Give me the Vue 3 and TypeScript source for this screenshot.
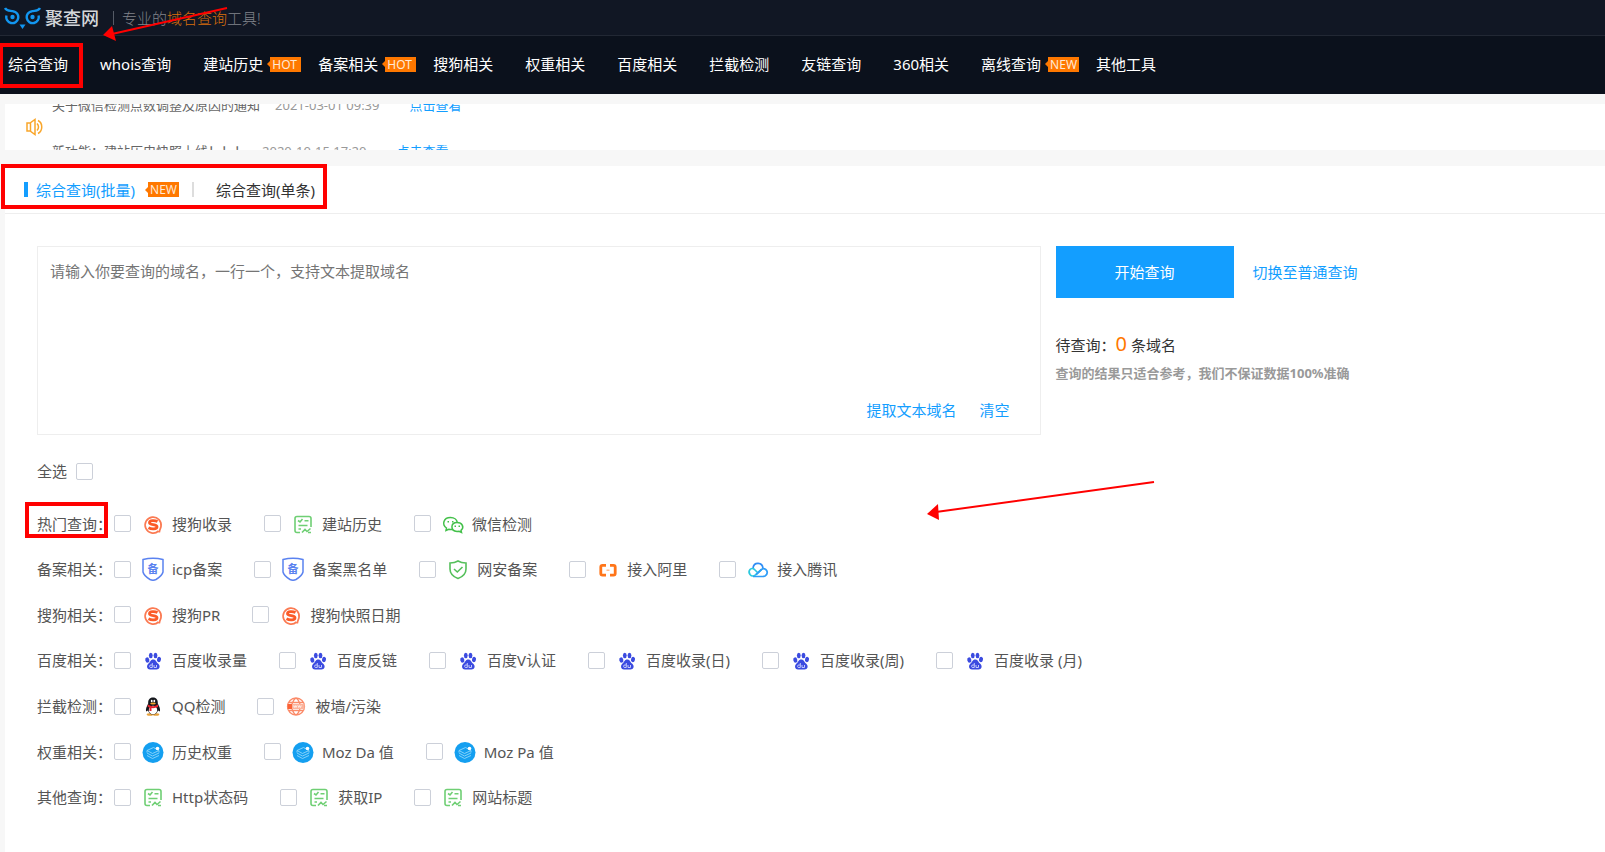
<script setup lang="ts">
import { ref, computed } from 'vue'

interface NavItem { text: string; badge?: string }
interface Option { icon: string; text: string }
interface Group { title: string; options: Option[] }

const nav: NavItem[] = [
  { text: '综合查询' },
  { text: 'whois查询' },
  { text: '建站历史', badge: 'HOT' },
  { text: '备案相关', badge: 'HOT' },
  { text: '搜狗相关' },
  { text: '权重相关' },
  { text: '百度相关' },
  { text: '拦截检测' },
  { text: '友链查询' },
  { text: '360相关' },
  { text: '离线查询', badge: 'NEW' },
  { text: '其他工具' },
]

const notices = [
  { text: '关于微信检测点数调整及原因的通知', date: '2021-03-01 09:39' },
  { text: '新功能：建站历史快照上线！！！', date: '2020-10-15 17:20' },
]

const groups: Group[] = [
  { title: '热门查询', options: [
    { icon: 'sogou', text: '搜狗收录' },
    { icon: 'list', text: '建站历史' },
    { icon: 'wechat', text: '微信检测' },
  ] },
  { title: '备案相关', options: [
    { icon: 'icp', text: 'icp备案' },
    { icon: 'icp', text: '备案黑名单' },
    { icon: 'shield', text: '网安备案' },
    { icon: 'ali', text: '接入阿里' },
    { icon: 'cloud', text: '接入腾讯' },
  ] },
  { title: '搜狗相关', options: [
    { icon: 'sogou', text: '搜狗PR' },
    { icon: 'sogou', text: '搜狗快照日期' },
  ] },
  { title: '百度相关', options: [
    { icon: 'baidu', text: '百度收录量' },
    { icon: 'baidu', text: '百度反链' },
    { icon: 'baidu', text: '百度V认证' },
    { icon: 'baidu', text: '百度收录(日)' },
    { icon: 'baidu', text: '百度收录(周)' },
    { icon: 'baidu', text: '百度收录 (月)' },
  ] },
  { title: '拦截检测', options: [
    { icon: 'qq', text: 'QQ检测' },
    { icon: 'globe', text: '被墙/污染' },
  ] },
  { title: '权重相关', options: [
    { icon: 'stack', text: '历史权重' },
    { icon: 'stack', text: 'Moz Da 值' },
    { icon: 'stack', text: 'Moz Pa 值' },
  ] },
  { title: '其他查询', options: [
    { icon: 'list', text: 'Http状态码' },
    { icon: 'list', text: '获取IP' },
    { icon: 'list', text: '网站标题' },
  ] },
]

const domains = ref('')
const selected = ref<string[]>([])
const allKeys = groups.flatMap(g => g.options.map(o => g.title + o.text))
const count = computed(() => domains.value.split('\n').filter(l => l.trim()).length)
const allSelected = computed({
  get: () => selected.value.length === allKeys.length,
  set: (on: boolean) => { selected.value = on ? [...allKeys] : [] },
})
function extract() {
  domains.value = (domains.value.match(/[a-z0-9-]+(\.[a-z0-9-]+)+/gi) ?? []).join('\n')
}
</script>

<template>
  <div class="page">
    <header>
      <div class="brand">
        <a class="logo" href="#">
          <svg width="37" height="24" viewBox="0 0 37 24" fill="none" stroke="#1296f0" stroke-width="2.400">
            <path d="M1 2C3 5.500 6 4.500 9 5.200A6 6 0 1 1 2.500 9.500" />
            <path d="M36 2C34 5.500 31 4.500 28 5.200A6 6 0 1 0 34.500 9.500" />
            <circle cx="8.500" cy="11" r="2.200" fill="#1296f0" stroke="none" />
            <circle cx="28.500" cy="11" r="2.200" fill="#1296f0" stroke="none" />
            <path d="M15.500 18.500H21.500L18.500 23Z" fill="#1296f0" stroke="none" />
          </svg>
          <span>聚查网</span>
        </a>
        <p class="slogan">专业的<em>域名查询</em>工具!</p>
      </div>
      <nav>
        <a v-for="n in nav" :key="n.text" href="#" :class="{ badged: n.badge }">{{ n.text }}<span v-if="n.badge" class="badge">{{ n.badge }}</span></a>
      </nav>
    </header>

    <section class="notice">
      <svg class="speaker" width="17" height="18" viewBox="0 0 17 18" fill="none" stroke="#f9a62b" stroke-width="1.500">
        <path d="M1 5H4L9 1.500V16.500L4 13H1ZM4.500 5V13" />
        <path d="M11 5.500C13 7.500 13 10.500 11 12.500M12 2.500C17 5 17 13 12 15.500" />
      </svg>
      <ul>
        <li v-for="n in notices" :key="n.date">
          <span>{{ n.text }}</span><time>{{ n.date }}</time><a href="#">点击查看</a>
        </li>
      </ul>
    </section>

    <main>
      <div class="tabs">
        <a class="tab active" href="#">综合查询(批量)<span class="badge">NEW</span></a>
        <a class="tab" href="#">综合查询(单条)</a>
      </div>

      <form @submit.prevent>
        <div class="query">
          <div class="box">
            <textarea v-model="domains" aria-label="域名" placeholder="请输入你要查询的域名，一行一个，支持文本提取域名"></textarea>
            <div class="tools">
              <button type="button" class="link" @click="extract">提取文本域名</button>
              <button type="button" class="link" @click="domains = ''">清空</button>
            </div>
          </div>
          <div class="side">
            <div class="actions">
              <button type="submit" class="start">开始查询</button>
              <a href="#">切换至普通查询</a>
            </div>
            <p class="count">待查询：<b>{{ count }}</b> 条域名</p>
            <p class="hint">查询的结果只适合参考，我们不保证数据100%准确</p>
          </div>
        </div>

        <label class="all">全选<input v-model="allSelected" type="checkbox" /></label>

        <div class="groups">
          <div v-for="g in groups" :key="g.title" class="group" role="group" :aria-label="g.title">
            <span class="title">{{ g.title }}：</span>
            <label v-for="o in g.options" :key="o.text" class="option">
              <input v-model="selected" type="checkbox" :value="g.title + o.text" />
              <svg width="24" height="24" viewBox="0 0 24 24" fill="none">
                <g v-if="o.icon === 'sogou'">
                  <path d="M17.500 19A8 8 0 1 1 20 14.500C19.600 17 18 18.300 18.500 20.500" stroke="#fb7a52" stroke-width="1.700" />
                  <path d="M16.500 9.500C14 8.300 8.500 8 8.500 10.700C8.500 13.300 16 12 16 14.700C16 17.300 10.500 17.300 7.500 15.800" stroke="#fb5b28" stroke-width="2.800" />
                </g>
                <g v-else-if="o.icon === 'list'" stroke="#6fcf74" stroke-width="1.600">
                  <path d="M20 15V6.500Q20 4.500 18 4.500H6Q4 4.500 4 6.500V18.500Q4 20.500 6 20.500H9" />
                  <path d="M7 8.500L9 10L11.500 7M13.500 8.800H17.500M7.500 13.500H16.500M7.500 17H10M11 20.500L14 17.500L16 19.500L19.500 16.500M17 20.500H20" />
                </g>
                <g v-else-if="o.icon === 'wechat'" stroke="#43c04a" stroke-width="1.500">
                  <path d="M12 17.300C10.500 17.700 9 17.600 7.800 17.200L5 18.500L5.500 16C0.500 12.500 2.500 5.500 9.500 5.500C13.500 5.500 16 8 16.300 10.500" />
                  <path d="M16 10.500C9.500 10.500 9 19 16 19.500L18 19.300L20.500 20.500L20 18.300C23.500 15.500 21.500 10.500 16 10.500Z" />
                  <path d="M6.500 9.800H8M11 9.800H12.500M13.500 14.200H15M17.500 14.200H19" />
                </g>
                <g v-else-if="o.icon === 'icp'">
                  <path d="M2 2.500Q12 0 22 2.500V15Q21 19 15 22.500Q12 24 9 22.500Q3 19 2 15Z" stroke="#5a82f0" stroke-width="1.500" />
                  <text x="12" y="16" text-anchor="middle" class="mark">备</text>
                </g>
                <g v-else-if="o.icon === 'shield'" stroke="#55c05b" stroke-width="1.600">
                  <path d="M12 4C9.500 5.500 7 6 4 6V12C4 17 8 20 12 21.500C16 20 20 17 20 12V6C17 6 14.500 5.500 12 4Z" />
                  <path d="M8 12L11.300 15L16.500 10" />
                </g>
                <g v-else-if="o.icon === 'ali'" stroke="#ff7519" stroke-width="2.800">
                  <path d="M10 8.400H6.500Q4.800 8.400 4.800 10V16.500Q4.800 18.100 6.500 18.100H10M14 8.400H17.500Q19.200 8.400 19.200 10V16.500Q19.200 18.100 17.500 18.100H14" />
                  <path d="M10.500 13.200H13.500" stroke="#ffb27d" stroke-width="1.300" />
                </g>
                <g v-else-if="o.icon === 'cloud'" stroke-width="1.700">
                  <path d="M7 11C8 4.500 16.500 5 17 11.500" stroke="#2f8df5" />
                  <path d="M12 16L8.500 12.500C5 9.500 1.500 14 4 17.500C6 20 8.500 19 10 17.500L15.500 12.500" stroke="#2bc9de" />
                  <path d="M10 17.500L15.500 12.500C20 9.500 23.500 16 19 19Q18 19.500 16 19.500H7" stroke="#2f9df8" />
                </g>
                <g v-else-if="o.icon === 'baidu'" fill="#3b4be0">
                  <ellipse cx="6.300" cy="12" rx="2" ry="2.700" transform="rotate(-15 6.300 12)" />
                  <ellipse cx="9.800" cy="7.500" rx="1.900" ry="2.700" />
                  <ellipse cx="14.500" cy="7.500" rx="1.900" ry="2.700" />
                  <ellipse cx="18" cy="11.500" rx="2" ry="2.700" transform="rotate(15 18 11.500)" />
                  <path d="M12.200 11.500C9.500 11.500 9.500 14 7.500 15.500C4.800 18 6.200 21.500 9 21.500H15.500C18.500 21.500 20 18 17 15.500C15 14 15 11.500 12.200 11.500Z" />
                  <path d="M11.300 15V19.500H9.200Q8 18.300 9.200 17H11.300M13 17V19.500H15.500V17" stroke="#c3c8fb" stroke-width="1" fill="none" />
                </g>
                <g v-else-if="o.icon === 'qq'">
                  <ellipse cx="9" cy="20.500" rx="3.300" ry="1.300" fill="#e8a13a" />
                  <ellipse cx="15" cy="20.500" rx="3.300" ry="1.300" fill="#e8a13a" />
                  <path d="M12 3.500C8.500 3.500 7 6 7.200 9.500C6 12 4.500 14.500 5 17.500L7 16.500C8 19 9.500 20.500 12 20.500S16 19 17 16.500L19 17.500C19.500 14.500 18 12 16.800 9.500C17 6 15.500 3.500 12 3.500Z" fill="#15171c" />
                  <ellipse cx="12" cy="16" rx="4.200" ry="4.300" fill="#fff" />
                  <path d="M7 10.500Q12 14 17 10.500V13Q13.500 14.500 10.500 14V17H8.500V13.500L6.500 12.500Z" fill="#e3232d" />
                  <ellipse cx="10.700" cy="7" rx="0.900" ry="1.200" fill="#fff" />
                  <ellipse cx="13.300" cy="7" rx="0.900" ry="1.200" fill="#fff" />
                  <ellipse cx="12" cy="9.500" rx="2.800" ry="0.900" fill="#f2a52d" />
                </g>
                <g v-else-if="o.icon === 'globe'">
                  <path d="M12 4A8.500 8.500 0 1 0 12 21A8.500 8.500 0 1 0 12 4ZM12 4C6.500 8 6.500 17 12 21C17.500 17 17.500 8 12 4ZM5 8.500H19M5 16.500H19" stroke="#fb8a68" stroke-width="1.300" />
                  <path d="M3.500 10H20.500V15H3.500Z" fill="#fbb39c" />
                  <path d="M3.500 10H8V15H3.500Z" fill="#fb6236" />
                  <path d="M9.500 11.500L10.300 13.500L11.200 11.500L12 13.500L12.900 11.500M14 11.500L14.800 13.500L15.700 11.500L16.500 13.500L17.400 11.500" stroke="#fff" stroke-width="0.700" />
                </g>
                <g v-else>
                  <circle cx="12" cy="12.500" r="10.500" fill="#149ff0" />
                  <path d="M6 10.500L12.500 7.500L18 10.500L11.500 13.500ZM6 13L11.500 16L18 13M6 15.500L11.500 18.500L18 15.500M6 10.500V12.500M18 10.500V12.500" stroke="#8fd6fa" stroke-width="0.900" />
                  <circle cx="16.500" cy="8.500" r="1.800" fill="#fff" />
                </g>
              </svg>
              <span>{{ o.text }}</span>
            </label>
          </div>
        </div>
      </form>
    </main>

    <svg class="marks" width="1160" height="545" viewBox="0 0 1160 545" fill="none" stroke="#f00" aria-hidden="true">
      <g stroke-width="4">
        <rect x="1" y="45" width="80" height="41" />
        <rect x="3" y="166" width="322" height="41" />
        <rect x="27" y="504" width="79" height="32" />
      </g>
      <path d="M227 8L112 34M1154 482L936 512" stroke-width="2" />
      <path d="M103 35L112 26L116 41ZM927 514L938 504L939 520Z" fill="#f00" stroke="none" />
    </svg>
  </div>
</template>

<style>
body {
  margin: 0;
}
</style>

<style scoped>
.page {
  position: relative;
  display: flex;
  flex-direction: column;
  min-height: 100vh;
  overflow-x: hidden;
  background: #f7f7f7;
  color: #333;
  font: 15px/24px "Noto Sans", "Noto Sans CJK SC", sans-serif;
}
a,
.link {
  color: #139eff;
  text-decoration: none;
}
p,
ul {
  margin: 0;
  padding: 0;
}
button,
textarea {
  font: inherit;
}
button {
  padding: 0;
  border: 0;
  background: none;
  cursor: pointer;
}
header {
  background: #0b111c;
}
.brand {
  display: flex;
  align-items: center;
  height: 35px;
  padding-left: 4px;
  border-bottom: 1px solid #222834;
  background: #111724;
}
.logo {
  display: flex;
  align-items: center;
  gap: 4px;
  color: #d3d6da;
  font-size: 18px;
  font-weight: 500;
}
.slogan {
  margin-left: 14px;
  padding-left: 8px;
  border-left: 1px solid #555b66;
  color: #81848a;
  font-weight: 300;
  line-height: 14px;
}
.slogan em {
  color: #d96f0c;
  font-style: normal;
}
nav {
  display: flex;
  align-items: center;
  height: 56px;
  padding: 0 8px 2px;
  white-space: nowrap;
}
nav a {
  display: flex;
  align-items: center;
  margin-right: 32px;
  color: #fff;
}
nav a.badged {
  margin-right: 17px;
}
.badge {
  display: inline-flex;
  align-items: center;
  gap: 2px;
  width: 34px;
  margin-left: 4px;
  background: linear-gradient(#ff7800, #ff7800) right / 31px 100% no-repeat;
  color: #ffe9d6;
  font-size: 12px;
  line-height: 15px;
}
.badge::before {
  border: 3px solid transparent;
  border-right-color: #ff7800;
  border-left: 0;
  content: "";
}
.notice {
  display: flex;
  align-items: center;
  height: 46px;
  margin: 10px 0 16px 5px;
  padding-left: 21px;
  overflow: hidden;
  background: #fff;
}
.speaker {
  flex: none;
}
.notice ul {
  align-self: flex-start;
  margin: -22px 0 0 9px;
  color: #666;
  font-size: 13px;
  list-style: none;
}
.notice li {
  display: flex;
  align-items: center;
  height: 46px;
  white-space: nowrap;
}
time {
  margin: 0 30px 0 15px;
  color: #999;
}
main {
  flex: 1;
  margin-left: 5px;
  background: #fff;
}
.tabs {
  display: flex;
  align-items: center;
  height: 47px;
  padding-left: 19px;
  border-bottom: 1px solid #eee;
}
.tab {
  display: flex;
  align-items: center;
  color: #333;
}
.tab.active {
  color: #139eff;
}
.tab.active::before {
  width: 4px;
  height: 15px;
  margin-right: 8px;
  background: #139eff;
  content: "";
}
.tab .badge {
  margin-left: 10px;
}
.tab + .tab::before {
  width: 2px;
  height: 15px;
  margin: 0 22px 0 13px;
  background: #ddd;
  content: "";
}
form {
  padding: 32px 0 32px 32px;
}
.query {
  display: flex;
  gap: 15px;
}
.box {
  box-sizing: border-box;
  display: flex;
  flex-direction: column;
  width: 64%;
  height: 189px;
  border: 1px solid #eee;
}
textarea {
  flex: 1;
  padding: 12px;
  border: 0;
  outline: 0;
  resize: none;
  background: none;
  color: #333;
}
textarea::placeholder {
  color: #757575;
}
.tools {
  display: flex;
  justify-content: flex-end;
  gap: 23px;
  padding: 0 30px 12px;
}
.actions {
  display: flex;
  align-items: center;
  gap: 19px;
  margin-bottom: 32px;
}
.start {
  width: 178px;
  height: 52px;
  background: #139eff;
  color: #fff;
}
.count,
.hint {
  line-height: 28px;
}
.count b {
  color: #ff7800;
  font-size: 20px;
  font-weight: 400;
}
.hint {
  color: #999;
  font-size: 13px;
  font-weight: 700;
}
.all {
  display: inline-flex;
  align-items: center;
  gap: 9px;
  height: 30px;
  margin: 21px 0 15px;
  color: #555;
}
input {
  appearance: none;
  box-sizing: border-box;
  flex: none;
  width: 17px;
  height: 17px;
  margin: 0;
  border: 1px solid #ccd0d9;
  border-radius: 2px;
  background: #fff;
}
input:checked {
  background: #139eff;
}
.groups {
  display: grid;
  grid-auto-rows: 1fr;
  min-height: 319px;
  color: #555;
}
.group {
  display: flex;
  align-items: center;
  white-space: nowrap;
}
.title {
  width: 77px;
}
.option {
  display: flex;
  align-items: center;
  margin-right: 32px;
}
.option svg {
  margin: 0 7px 0 10px;
}
.mark {
  fill: #5a82f0;
  font-size: 11px;
  font-weight: 700;
}
.marks {
  position: absolute;
  top: 0;
  left: 0;
  pointer-events: none;
}
</style>
